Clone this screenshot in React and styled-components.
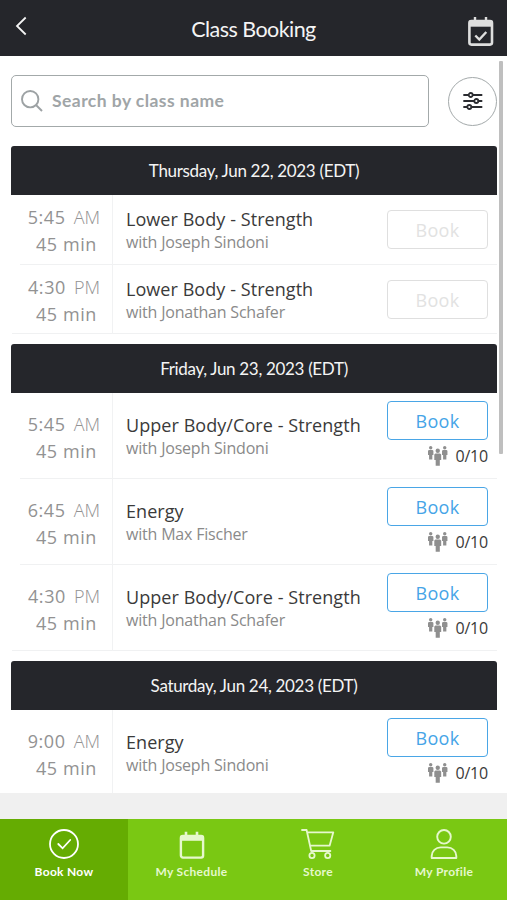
import styled, { createGlobalStyle } from 'styled-components';

const GlobalStyle = createGlobalStyle`
  * {
    box-sizing: border-box;
  }
  body {
    margin: 0;
    background-color: #f0f0f0;
  }
`;

const Container = styled.div`
  width: 507px;
  height: 900px;
  display: flex;
  flex-direction: column;
  overflow: hidden;
  font-family: 'Open Sans', 'Liberation Sans', sans-serif;
`;

const Header = styled.header`
  height: 56px;
  flex: none;
  display: grid;
  grid-template-columns: 60px 1fr 60px;
  background-color: #25262b;
  color: #f4f4f4;
`;

const HeaderTitle = styled.h1`
  margin: 0;
  padding-top: 2px;
  text-align: center;
  font-family: Lato, sans-serif;
  font-size: 21.5px;
  font-weight: 400;
  line-height: 54px;
  letter-spacing: -0.55px;
`;

const BackIcon = styled.svg`
  width: 12px;
  height: 20px;
  margin: 16px 0 0 15px;
`;

const CalendarIcon = styled.svg`
  width: 28px;
  height: 31px;
  margin: 16px 0 0 20px;
`;

const Content = styled.main`
  height: 737px;
  flex: none;
  display: flex;
  justify-content: space-between;
  overflow: hidden;
  background-color: #fff;
`;

const List = styled.div`
  width: 486px;
  margin-left: 11px;
`;

const ScrollThumb = styled.div`
  width: 4px;
  height: 393px;
  margin: 5px 4.5px 0 0;
  border-radius: 1px;
  background-color: #bfbfbf;
`;

const SearchRow = styled.div`
  display: flex;
  justify-content: space-between;
  align-items: center;
  padding-top: 19px;
  margin-bottom: 19px;
`;

const SearchBox = styled.div`
  width: 418px;
  height: 52px;
  display: flex;
  align-items: center;
  padding: 0 0 2px 8px;
  border: 1px solid #a3a9aa;
  border-radius: 5px;
  color: #a0a5a7;
  font-family: Lato, sans-serif;
  font-size: 17.5px;
  font-weight: 700;
  letter-spacing: 0.45px;
`;

const SearchIcon = styled.svg`
  width: 24px;
  height: 24px;
  margin: 2px 8px 0 0;
`;

const FilterButton = styled.div`
  width: 49px;
  height: 49px;
  display: flex;
  justify-content: center;
  align-items: center;
  border: 1px solid #a3a9aa;
  border-radius: 50%;
`;

const Day = styled.section`
  margin-bottom: 10px;
`;

const DayTitle = styled.h2`
  height: 49px;
  margin: 0;
  border-radius: 3px 3px 0 0;
  background-color: #25262b;
  color: #f4f4f4;
  text-align: center;
  font-family: Lato, sans-serif;
  font-size: 17px;
  font-weight: 400;
  line-height: 50px;
  letter-spacing: -0.32px;
`;

const Row = styled.div`
  height: ${({ $full }) => ($full ? '69.5px' : '86px')};
  display: grid;
  grid-template-columns: 102px 1fr 101px;
  align-items: center;
  padding-right: 9px;
  background: linear-gradient(#f0f1f2, #f0f1f2) no-repeat bottom right /
    calc(100% - ${({ $last }) => ($last ? '1px' : '9px')}) 1px;
`;

const TimeCol = styled.div`
  height: 100%;
  display: flex;
  flex-direction: column;
  justify-content: center;
  align-items: flex-end;
  border-right: 1px solid #f1f2f3;
  padding-top: 3px;
  color: #929292;
  font-size: 18px;
  line-height: 27px;
  letter-spacing: 0.6px;
`;

const Time = styled.div`
  padding-right: 12px;
  font-weight: 400;
  span {
    margin-left: 8px;
    font-weight: 300;
    letter-spacing: 0;
  }
`;

const Duration = styled.div`
  padding-right: 15px;
`;

const Info = styled.div`
  padding: ${({ $full }) => ($full ? '1px' : '0')} 0 0 13px;
  white-space: nowrap;
`;

const ClassName = styled.div`
  color: #3a3a3a;
  font-size: 18px;
  line-height: 24px;
  letter-spacing: 0.06px;
`;

const Coach = styled.div`
  color: #8a8a8a;
  font-size: 16px;
  line-height: 22px;
  letter-spacing: -0.2px;
`;

const BookButton = styled.button`
  width: 101px;
  height: 39px;
  display: block;
  padding: 1px 0 0;
  border: 1px solid ${({ disabled }) => (disabled ? '#dfdfdf' : '#4aa6e6')};
  border-radius: 4px;
  background-color: #fff;
  color: ${({ disabled }) => (disabled ? '#e2e2e2' : '#45a4e7')};
  font-family: inherit;
  font-size: 18px;
  letter-spacing: 0.3px;
`;

const Spots = styled.div`
  height: 32px;
  display: flex;
  justify-content: flex-end;
  align-items: center;
  gap: 7px;
  color: #3a3a3a;
  font-size: 16px;
  letter-spacing: -0.2px;
`;

const Nav = styled.nav`
  height: 81px;
  flex: none;
  margin-top: auto;
  display: grid;
  grid-template-columns: 128px 127px 126px 126px;
  background-color: #7ac813;
`;

const NavItem = styled.div`
  display: flex;
  flex-direction: column;
  align-items: center;
  padding-top: 9px;
  background-color: ${({ $active }) => ($active ? '#65ac02' : 'transparent')};
  color: ${({ $active }) => ($active ? '#fff' : '#e6f8cd')};
  font-family: Lato, sans-serif;
  font-size: 12px;
  font-weight: 700;
  letter-spacing: 0.3px;
  line-height: 16px;
  svg {
    margin-bottom: 4px;
  }
`;

const Person = ({ x, y }) => (
  <g transform={`translate(${x} ${y})`}>
    <circle cx="3" cy="2" r="1.9" />
    <path d="M1 4.4h4l1 1V10H4.8v5H1.2v-5H0V5.4z" />
  </g>
);

const PeopleIcon = () => (
  <svg width="20" height="20" viewBox="0 0 20 20" fill="#8f8f8f">
    <g transform="scale(.9)">
      <Person x={0} y={0} />
      <Person x={15.6} y={0} />
    </g>
    <g transform="translate(6.3 2.4) scale(1.15)">
      <Person x={0} y={0} />
    </g>
  </svg>
);

const FilterIcon = () => (
  <svg width="20" height="18" viewBox="0 0 20 18" fill="#fff" stroke="#2b2c30" strokeWidth="1.8">
    <path d="M1 3h17.6M1 9h17.6M1 15h17.6" strokeLinecap="round" />
    <circle cx="7.7" cy="3" r="2" />
    <circle cx="13.3" cy="9" r="2" />
    <circle cx="6.3" cy="15" r="2" />
  </svg>
);

const CheckIcon = () => (
  <svg width="32" height="32" viewBox="0 0 32 32" fill="none" stroke="#fff" strokeWidth="1.8">
    <circle cx="16" cy="16" r="14" />
    <path d="M10.3 16l4.3 4.3 7.6-8.3" strokeLinecap="round" />
  </svg>
);

const ScheduleIcon = () => (
  <svg width="26" height="32" viewBox="0 0 26 32" fill="none" stroke="#e6f8cd">
    <rect x="1.9" y="8" width="22.2" height="21.6" rx="2" strokeWidth="2.4" />
    <path d="M1.5 10.3h23" strokeWidth="5" />
    <path d="M7 3.8v4M18 3.8v4" strokeWidth="2.6" />
  </svg>
);

const CartIcon = () => (
  <svg width="34" height="32" viewBox="0 0 34 32" fill="none" stroke="#e6f8cd" strokeWidth="1.8" strokeLinejoin="round">
    <path d="M1 2h4.6l4.6 21h19.2M6.1 4.3h26.2l-3.7 13.4H9.2" strokeLinecap="round" />
    <circle cx="11" cy="27.5" r="2.6" />
    <circle cx="26.7" cy="27.5" r="2.6" />
  </svg>
);

const ProfileIcon = () => (
  <svg width="28" height="32" viewBox="0 0 28 32" fill="none" stroke="#e6f8cd" strokeWidth="1.9">
    <circle cx="14" cy="8.8" r="6.8" />
    <path d="M1.7 30v-2c0-5 4-8.6 9-8.6h6.6c5 0 9 3.6 9 8.6v2z" strokeLinejoin="round" />
  </svg>
);

const days = [
  {
    title: 'Thursday, Jun 22, 2023 (EDT)',
    classes: [
      { time: '5:45', period: 'AM', name: 'Lower Body - Strength', coach: 'Joseph Sindoni', full: true },
      { time: '4:30', period: 'PM', name: 'Lower Body - Strength', coach: 'Jonathan Schafer', full: true },
    ],
  },
  {
    title: 'Friday, Jun 23, 2023 (EDT)',
    classes: [
      { time: '5:45', period: 'AM', name: 'Upper Body/Core - Strength', coach: 'Joseph Sindoni' },
      { time: '6:45', period: 'AM', name: 'Energy', coach: 'Max Fischer' },
      { time: '4:30', period: 'PM', name: 'Upper Body/Core - Strength', coach: 'Jonathan Schafer' },
    ],
  },
  {
    title: 'Saturday, Jun 24, 2023 (EDT)',
    classes: [{ time: '9:00', period: 'AM', name: 'Energy', coach: 'Joseph Sindoni' }],
  },
];

const ClassRow = ({ item, last }) => (
  <Row $full={item.full} $last={last}>
    <TimeCol>
      <Time>
        {item.time}
        <span>{item.period}</span>
      </Time>
      <Duration>45 min</Duration>
    </TimeCol>
    <Info $full={item.full}>
      <ClassName>{item.name}</ClassName>
      <Coach>with {item.coach}</Coach>
    </Info>
    <div>
      <BookButton disabled={item.full}>Book</BookButton>
      {!item.full && (
        <Spots>
          <PeopleIcon />
          0/10
        </Spots>
      )}
    </div>
  </Row>
);

const App = () => {
  return (
    <Container>
      <GlobalStyle />
      <Header>
        <BackIcon viewBox="0 0 12 20" fill="none" stroke="#f4f4f4" strokeWidth="1.8">
          <path d="M10.7 1.5L2 10l8.7 8.5" />
        </BackIcon>
        <HeaderTitle>Class Booking</HeaderTitle>
        <CalendarIcon viewBox="0 0 28 31" fill="none" stroke="#dedede">
          <rect x="2.4" y="5" width="22.6" height="23.6" rx="2" strokeWidth="2.6" />
          <path d="M2 7.7h23.4" strokeWidth="6" />
          <path d="M8 1v4M19 1v4" strokeWidth="2.4" />
          <path d="M8.3 19.5l4 4 7-7.5" strokeWidth="2.4" />
        </CalendarIcon>
      </Header>
      <Content>
        <List>
          <SearchRow>
            <SearchBox>
              <SearchIcon viewBox="0 0 24 24" fill="none" stroke="#9da2a4" strokeWidth="1.9">
                <circle cx="10.2" cy="10.2" r="8.2" />
                <path d="M16 16l6 6" />
              </SearchIcon>
              Search by class name
            </SearchBox>
            <FilterButton>
              <FilterIcon />
            </FilterButton>
          </SearchRow>
          {days.map(day => (
            <Day key={day.title}>
              <DayTitle>{day.title}</DayTitle>
              {day.classes.map((item, i) => (
                <ClassRow key={item.time + item.period} item={item} last={i === day.classes.length - 1} />
              ))}
            </Day>
          ))}
        </List>
        <ScrollThumb />
      </Content>
      <Nav>
        <NavItem $active>
          <CheckIcon />
          Book Now
        </NavItem>
        <NavItem>
          <ScheduleIcon />
          My Schedule
        </NavItem>
        <NavItem>
          <CartIcon />
          Store
        </NavItem>
        <NavItem>
          <ProfileIcon />
          My Profile
        </NavItem>
      </Nav>
    </Container>
  );
};
export default App;
